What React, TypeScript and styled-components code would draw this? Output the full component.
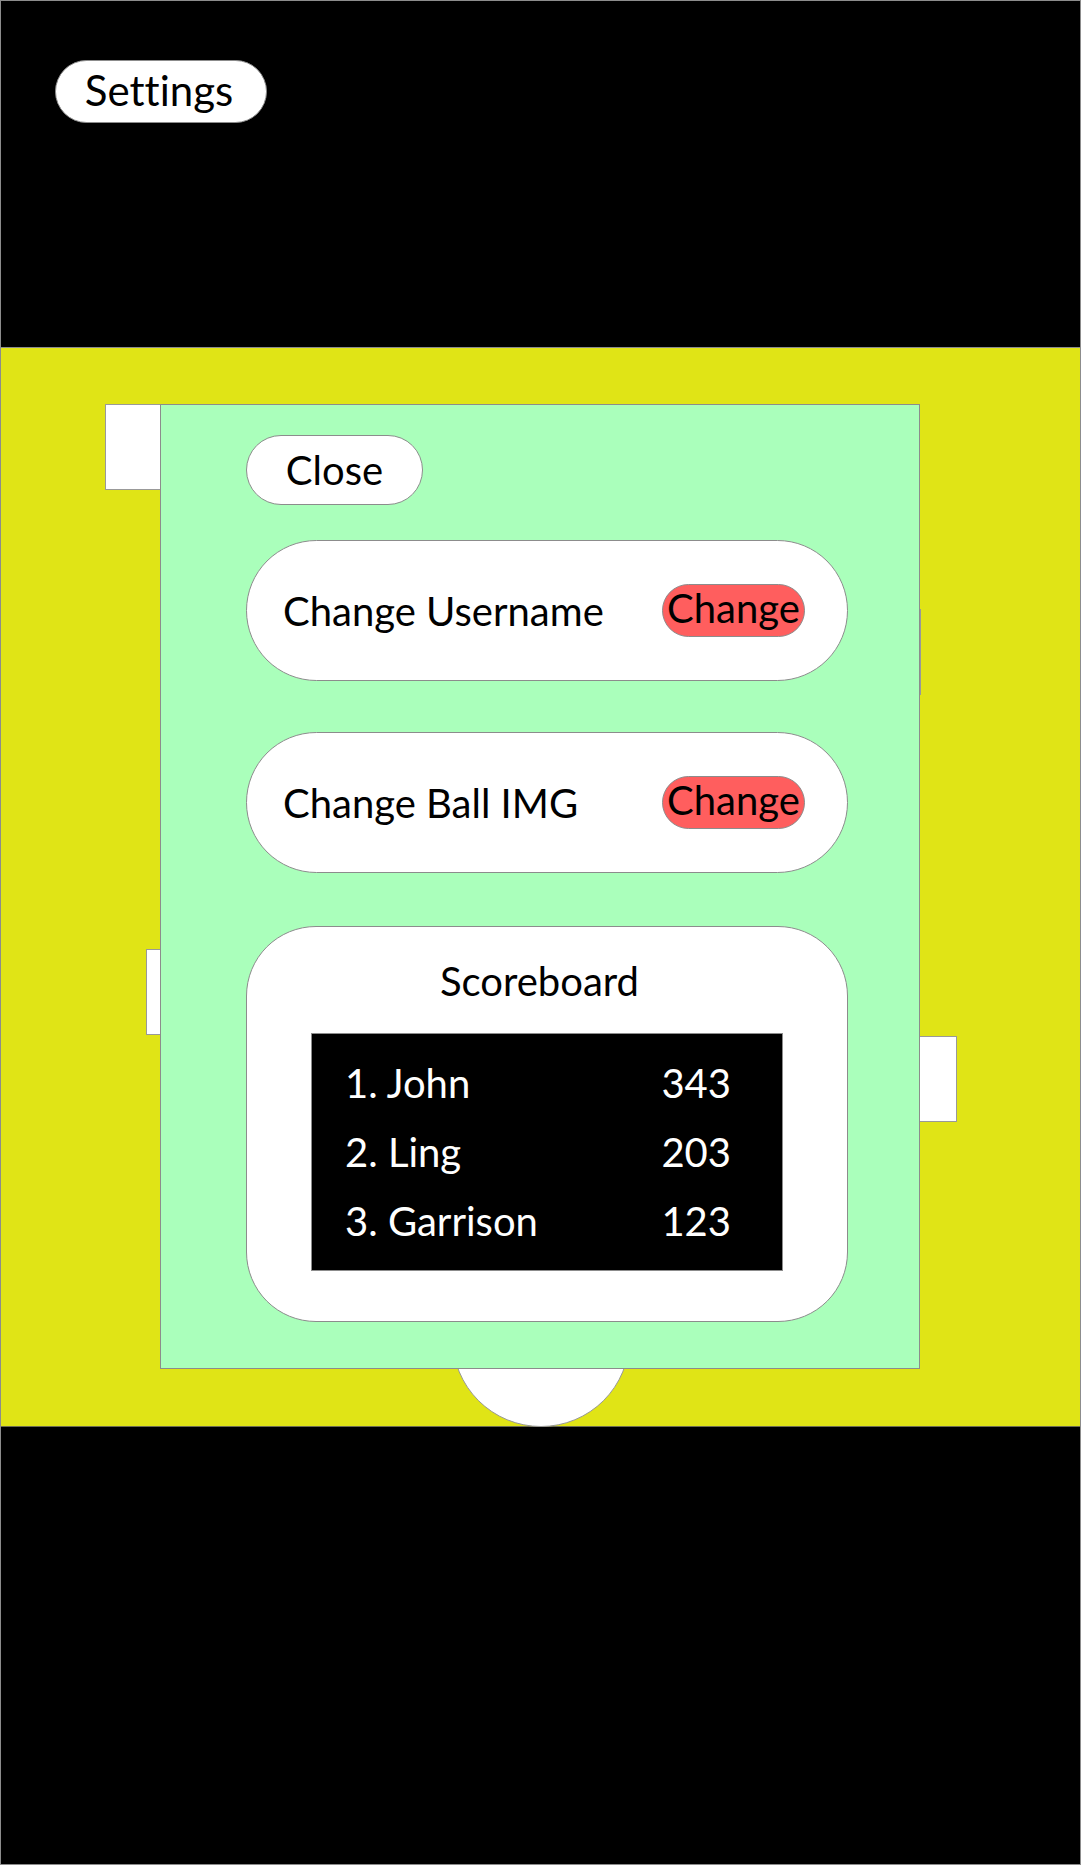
import styled, { createGlobalStyle } from 'styled-components';

const GlobalStyle = createGlobalStyle`
  html, body {
    margin: 0;
    padding: 0;
    background: #000;
  }
  body {
    font-family: Lato, 'Open Sans', sans-serif;
    font-variant-ligatures: none;
  }
  button {
    font-variant-ligatures: none;
  }
  * {
    box-sizing: border-box;
  }
`;

type Score = { name: string; points: number };

const scores: Score[] = [
  { name: 'John', points: 343 },
  { name: 'Ling', points: 203 },
  { name: 'Garrison', points: 123 },
];

const settingsRows = ['Change Username', 'Change Ball IMG'];

// spots of the paddles on the board, they belong to the game, not the layout
const paddles = [
  { left: 104, top: 56 },
  { left: 145, top: 601 },
  { left: 864, top: 261 },
  { left: 900, top: 688 },
];

const App = () => {
  return (
    <>
      <GlobalStyle />
      <Screen>
        <TopBar>
          <SettingsButton>Settings</SettingsButton>
        </TopBar>
        <Board>
          {paddles.map((p, i) => (
            <Paddle key={i} style={{ left: p.left, top: p.top }} />
          ))}
          <Ball />
          <Modal>
            <CloseButton>Close</CloseButton>
            {settingsRows.map((label) => (
              <SettingRow key={label}>
                <RowLabel>{label}</RowLabel>
                <ChangeButton>Change</ChangeButton>
              </SettingRow>
            ))}
            <ScoreCard>
              <ScoreTitle>Scoreboard</ScoreTitle>
              <ScoreTable>
                {scores.map((s, i) => (
                  <ScoreRow key={s.name}>
                    <span>
                      {i + 1}. {s.name}
                    </span>
                    <span>{s.points}</span>
                  </ScoreRow>
                ))}
              </ScoreTable>
            </ScoreCard>
          </Modal>
        </Board>
        <Footer />
      </Screen>
    </>
  );
};

export default App;

const Screen = styled.div`
  width: 1081px;
  height: 1865px;
  display: flex;
  flex-direction: column;
  background-color: #000;
  border: 1px solid #8c8c8c;
`;

const TopBar = styled.div`
  height: 346px;
  padding: 59px 0 0 54px;
  flex-shrink: 0;
`;

const SettingsButton = styled.button`
  width: 212px;
  height: 63px;
  padding: 0 4px 4px 0;
  border: 1px solid #8c8c8c;
  border-radius: 32px;
  background-color: #fff;
  color: #000;
  font-family: Lato, 'Open Sans', sans-serif;
  font-size: 42px;
  line-height: 1;
`;

const Board = styled.div`
  position: relative;
  height: 1080px;
  flex-shrink: 0;
  background-color: #e0e416;
  border-top: 1px solid #8c8c8c;
  border-bottom: 1px solid #6e6e50;
`;

const Footer = styled.div`
  flex: 1;
`;

const Paddle = styled.div`
  position: absolute;
  width: 56px;
  height: 86px;
  background-color: #fff;
  border: 1px solid #999;
`;

const Ball = styled.div`
  position: absolute;
  left: 451px;
  top: 901px;
  width: 178px;
  height: 178px;
  border-radius: 50%;
  background-color: #fff;
  border: 1px solid #999;
`;

const Modal = styled.div`
  position: absolute;
  left: 159px;
  top: 56px;
  width: 760px;
  height: 965px;
  display: flex;
  flex-direction: column;
  align-items: flex-start;
  padding: 30px 0 0 85px;
  background-color: #aaffbb;
  border: 1px solid #8c8c8c;
  z-index: 1;
`;

const CloseButton = styled.button`
  width: 177px;
  height: 70px;
  margin-bottom: 35px;
  padding: 0;
  border: 1px solid #8c8c8c;
  border-radius: 35px;
  background-color: #fff;
  color: #000;
  font-family: Lato, 'Open Sans', sans-serif;
  font-size: 40px;
  line-height: 1;
`;

const SettingRow = styled.div`
  width: 602px;
  height: 141px;
  margin-bottom: 51px;
  display: flex;
  align-items: center;
  justify-content: space-between;
  padding: 0 42px 0 36px;
  background-color: #fff;
  border: 1px solid #8c8c8c;
  border-radius: 71px;
  &:nth-of-type(2) {
    margin-bottom: 53px;
  }
`;

const RowLabel = styled.span`
  font-size: 40px;
  line-height: 48px;
  color: #000;
`;

const ChangeButton = styled.button`
  width: 143px;
  height: 53px;
  padding: 0 0 6px;
  display: flex;
  align-items: center;
  justify-content: center;
  border: 1px solid #8c8c8c;
  border-radius: 27px;
  background-color: #ff5e5e;
  color: #000;
  font-family: Lato, 'Open Sans', sans-serif;
  font-size: 40px;
  line-height: 1;
`;

const ScoreCard = styled.div`
  width: 602px;
  height: 396px;
  display: flex;
  flex-direction: column;
  align-items: center;
  padding-top: 30px;
  background-color: #fff;
  border: 1px solid #8c8c8c;
  border-radius: 70px;
`;

const ScoreTitle = styled.div`
  font-size: 40px;
  line-height: 48px;
  margin: 0 15px 28px 0;
  color: #000;
`;

const ScoreTable = styled.div`
  width: 472px;
  height: 238px;
  padding: 15px 51px 14px 33px;
  background-color: #000;
  border: 1px solid #8c8c8c;
`;

const ScoreRow = styled.div`
  display: flex;
  justify-content: space-between;
  height: 69px;
  font-size: 40px;
  line-height: 69px;
  color: #fff;
`;
